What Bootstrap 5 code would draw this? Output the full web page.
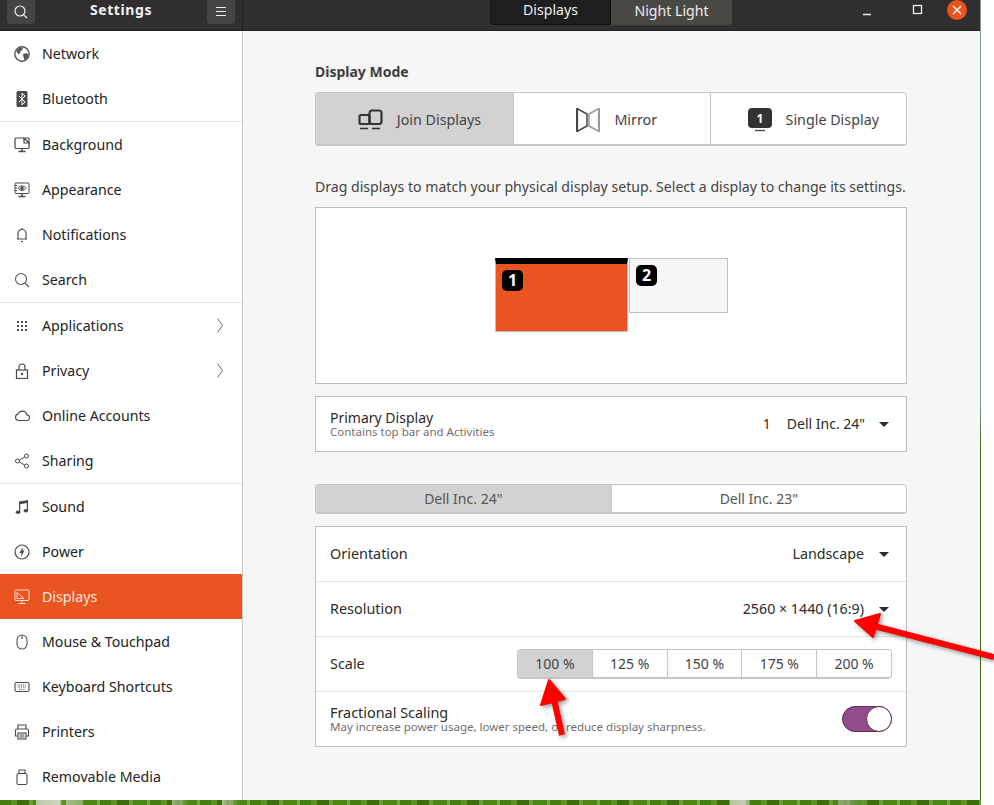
<!DOCTYPE html>
<html lang="en">
<head>
    <meta charset="UTF-8">
    <meta name="viewport" content="width=device-width, initial-scale=1.0">
    <title>Settings - Displays</title>
    <link href="https://cdn.jsdelivr.net/npm/bootstrap@5.3.0/dist/css/bootstrap.min.css" rel="stylesheet">
    <style>
        html, body { height: 100%; }
        body {
            background: #fff;
            font-family: "Noto Sans", "Open Sans", sans-serif;
            font-size: 14px;
            color: #2e2e2e;
            overflow: hidden;
        }
        .screen { height: 805px; display: flex; flex-direction: column; position: relative; }
        .app-window {
            height: 800px; width: 981px; display: flex; flex-direction: column;
            border-right: 1px solid #3f6b10;
            border-image: linear-gradient(#7d9aa3 0, #7d9aa3 50%, #3f6b10 56%, #3f6b10 100%) 1;
        }
        .grass {
            height: 5px; width: 981px;
            background:
                linear-gradient(90deg, transparent 36px, #b9c9a4 36px, #cfd8bf 60px, transparent 62px, transparent 66px, #a8bd8c 66px, #8fae68 82px, transparent 84px, transparent 172px, #9db67d 172px, transparent 190px, transparent 222px, #aebf95 222px, transparent 240px, transparent 730px, #b4c5a0 730px, #c4d0b4 745px, transparent 750px, transparent 838px, #8fa875 838px, transparent 870px),
                repeating-linear-gradient(90deg, #44800e 0 11px, #5c921f 11px 17px, #3a6f0c 17px 29px, #6b9c35 29px 33px, #4c8714 33px 47px, #7ba64b 47px 50px);
        }
        .title-bar { height: 31px; background: #302e2e; border-bottom: 1px solid #1f1e1e; color: #fff; flex-shrink: 0; }
        .title-left { width: 242px; padding: 0 7px; }
        .title-btn {
            width: 28px; height: 24px; background: #474543; border-radius: 0 0 4px 4px;
            display: flex; align-items: center; justify-content: center;
        }
        .title-name { font-weight: 700; font-size: 14px; letter-spacing: .6px; color: #f2f2f2; line-height: 20px; }
        .title-right { flex: 1; position: relative; border-left: 1px solid #222; }
        .view-tabs { margin-left: 247px; height: 25px; }
        .view-tabs .vt {
            width: 121px; height: 25px; padding-bottom: 4px; display: flex; align-items: center; justify-content: center;
            font-size: 14.1px; color: #eee; background: #4a4845; border-radius: 0 0 4px 0;
        }
        .view-tabs .vt.on { background: #1f1e1e; border-radius: 0 0 0 4px; border: 1px solid #111; border-top: 0; }
        .win-ctl { position: absolute; top: 0; left: 0; width: 737px; height: 30px; }
        .app-body { flex: 1; display: flex; min-height: 0; }
        .side-pane { width: 243px; background: #fff; border-right: 1px solid #c9c9c9; flex-shrink: 0; }
        .side-pane .list-group-item {
            height: 45px; border: 0; border-radius: 0; margin-top: 0; padding: 0 0 0 14px; background: #fff;
            display: flex; align-items: center; color: #232323; font-size: 14.2px;
        }
        .side-pane .list-group-item.with-sep { height: 46px; border-top: 1px solid #e3e3e3; }
        .side-pane .list-group-item.active { background: #e95420; color: #fde9e0; margin-top: 0; }
        .side-pane svg.ico { width: 16px; height: 16px; margin-right: 12px; flex-shrink: 0; }
        .side-pane .chev { margin-left: auto; margin-right: 19px; }
        .main-pane { flex: 1; background: #f6f6f6; padding: 31px 73px 0 72px; }
        .sec-title { font-weight: 700; font-size: 14px; color: #3d3d3d; line-height: 20px; margin-bottom: 10px; }
        .seg-group { display: flex; width: 100%; border: 1px solid #c6c6c6; border-bottom-width: 2px; border-radius: 4px; overflow: hidden; background: #fff; }
        .seg-group .btn {
            border: 0; border-left: 1px solid #c6c6c6; border-radius: 0; background: #fefefe; color: #444;
            font-size: 14px; padding: 0; flex: 1 1 0; display: flex; align-items: center; justify-content: center;
        }
        .seg-group .btn:first-child { border-left: 0; }
        .seg-group .btn.on { background: #d2d2d2; }
        .mode-group { height: 54px; }
        .mode-group .btn { gap: 14px; font-size: 14.3px; padding: 3px 0 0 10px; }
        .mode-group .btn:first-child { flex: 0 0 197px; }
        .hint-text { color: #444; margin: 31px 0 10px; line-height: 20px; font-size: 14.1px; white-space: nowrap; }
        .arrange-box { height: 177px; background: #fff; border: 1px solid #bdbdbd; position: relative; }
        .mon-a { position: absolute; left: 179px; top: 50px; width: 133px; height: 74px; background: #e95420; border: 1px solid #c2c2c2; border-top: 6px solid #000; }
        .mon-b { position: absolute; left: 313px; top: 50px; width: 99px; height: 55px; background: #f6f6f6; border: 1px solid #c2c2c2; }
        .mon-num {
            position: absolute; width: 21px; height: 21px; background: #000; color: #fff; border-radius: 5px;
            font-weight: 700; font-size: 16px; line-height: 21px; text-align: center;
        }
        .mon-a .mon-num { left: 6px; top: 6px; }
        .mon-b .mon-num { left: 6px; top: 6px; }
        .panel-box { background: #fff; border: 1px solid #bdbdbd; }
        .primary-row { height: 56px; margin: 12px 0 32px; padding: 0 17px 0 14px; }
        .sub-text { font-size: 11.5px; color: #6f6f6f; line-height: 12px; white-space: nowrap; }
        .main-text { line-height: 16px; color: #2b2b2b; }
        .label-wide { font-size: 14.4px; }
        .caret-down { width: 0; height: 0; border-left: 5px solid transparent; border-right: 5px solid transparent; border-top: 5px solid #2b2b2b; margin-left: 14px; }
        .disp-tabs { height: 30px; margin-bottom: 12px; }
        .disp-tabs .btn { color: #555; }
        .panel-box.list-group { border-radius: 0; }
        .panel-box .list-group-item {
            height: 55px; border: 0; border-top: 1px solid #e3e3e3; border-radius: 0; margin-top: 0; padding: 0 14px;
            display: flex; align-items: center; justify-content: space-between; color: #2b2b2b; background: #fff;
        }
        .panel-box .list-group-item:first-child { border-top: 0; height: 54px; }
        .panel-box .list-group-item.pick-row { padding-right: 17px; font-size: 14.25px; }
        .pick-row .caret-down { margin-left: 15px; }
        .row-label { font-size: 14.4px; }
        .scale-group { width: 375px; height: 30px; }
        .fs-switch { width: 50px; height: 26px; background: #924d8b; border: 1px solid #5c2f58; border-radius: 13px; position: relative; }
        .fs-knob { position: absolute; right: -1px; top: -1px; width: 26px; height: 26px; background: #fff; border: 1px solid #5c2f58; border-radius: 50%; }
        .red-marks { position: absolute; left: 0; top: 0; pointer-events: none; filter: drop-shadow(2px 2px 2px rgba(0,0,0,.4)); }
    </style>
</head>
<body>
<div class="screen">
    <div class="app-window">
        <div class="title-bar d-flex">
            <div class="title-left d-flex justify-content-between">
                <div class="title-btn">
                    <svg width="14" height="14" viewBox="0 0 14 14" fill="none" stroke="#eee" stroke-width="1.2"><circle cx="6" cy="6" r="5"/><path d="M9.8 9.8L13 13"/></svg>
                </div>
                <span class="title-name">Settings</span>
                <div class="title-btn">
                    <svg width="12" height="10" viewBox="0 0 12 10" stroke="#eee" stroke-width="1"><path d="M1 .5h10M1 4.5h10M1 8.5h10"/></svg>
                </div>
            </div>
            <div class="title-right">
                <div class="view-tabs d-flex">
                    <div class="vt on">Displays</div>
                    <div class="vt">Night Light</div>
                </div>
                <svg class="win-ctl" viewBox="0 0 737 30">
                    <path d="M620 14.5h8" stroke="#eee" stroke-width="1.5"/>
                    <rect x="670.5" y="5.5" width="8" height="8" fill="none" stroke="#eee" stroke-width="1.3"/>
                    <circle cx="714" cy="10" r="10" fill="#e95420"/>
                    <path d="M710 6l8 8M718 6l-8 8" stroke="#fff" stroke-width="1.4"/>
                </svg>
            </div>
        </div>
        <div class="app-body">
            <div class="side-pane list-group list-group-flush">
                <a class="list-group-item">
                    <svg class="ico" viewBox="0 0 16 16"><circle cx="8" cy="8" r="7.2" fill="none" stroke="#555" stroke-width="1.4"/><path d="M3 4l3-2.500 3 .5-1 2.500-2 .5.5 2-2 1-2-2zM9 8l4-1 1.500 2-2 4-2 1-1-3z" fill="#555"/></svg>
                    Network
                </a>
                <a class="list-group-item">
                    <svg class="ico" viewBox="0 0 16 16"><rect x="2.500" y="0" width="11" height="16" rx="1.500" fill="#4a4a4a"/><path d="M5 5l6 6-3 3V2l3 3-6 6" fill="none" stroke="#fff" stroke-width="1"/></svg>
                    Bluetooth
                </a>
                <a class="list-group-item with-sep">
                    <svg class="ico" viewBox="0 0 16 16" fill="none" stroke="#4a4a4a" stroke-width="1.200"><path d="M10 1H2a1 1 0 0 0-1 1v8.500a1 1 0 0 0 1 1h12a1 1 0 0 0 1-1V6"/><path d="M10 1l5 5V2a1 1 0 0 0-1-1zM10 1v5h5" fill="#fff"/><path d="M4.500 14.500h7M8 11.500v3" stroke-width="1.500"/></svg>
                    Background
                </a>
                <a class="list-group-item">
                    <svg class="ico" viewBox="0 0 16 16" fill="none" stroke="#4a4a4a" stroke-width="1"><rect x="1" y="1" width="14" height="10.500" rx="1"/><path d="M4 6.200c2.500-3 5.500-3 8 0-2.500 3-5.500 3-8 0z"/><circle cx="8" cy="6.200" r="1.300" fill="#4a4a4a"/><path d="M1 3.500h2M1 6h2M1 8.500h2"/><path d="M4.500 14.500h7M8 11.500v3" stroke-width="1.500"/></svg>
                    Appearance
                </a>
                <a class="list-group-item">
                    <svg class="ico" viewBox="0 0 16 16" fill="none" stroke="#4a4a4a" stroke-width="1.200"><path d="M4 12V6.500a4 4 0 0 1 8 0V12zM3 12h10M8 1v1.500M7 14.500h2"/></svg>
                    Notifications
                </a>
                <a class="list-group-item">
                    <svg class="ico" viewBox="0 0 16 16" fill="none" stroke="#555" stroke-width="1.100"><circle cx="7" cy="7" r="5.500"/><path d="M11 11l4 4"/></svg>
                    Search
                </a>
                <a class="list-group-item with-sep">
                    <svg class="ico" viewBox="0 0 16 16" fill="#4a4a4a"><rect x="3" y="3" width="2" height="2"/><rect x="7" y="3" width="2" height="2"/><rect x="11" y="3" width="2" height="2"/><rect x="3" y="7" width="2" height="2"/><rect x="7" y="7" width="2" height="2"/><rect x="11" y="7" width="2" height="2"/><rect x="3" y="11" width="2" height="2"/><rect x="7" y="11" width="2" height="2"/><rect x="11" y="11" width="2" height="2"/></svg>
                    Applications
                    <svg class="chev" width="6" height="15" viewBox="0 0 6 15" fill="none" stroke="#666"><path d="M.5 .5L5.500 7.500.5 14.500"/></svg>
                </a>
                <a class="list-group-item">
                    <svg class="ico" viewBox="0 0 16 16" fill="none" stroke="#4a4a4a" stroke-width="1.200"><rect x="2.500" y="7" width="11" height="8.500"/><path d="M5 7V4a3 3 0 0 1 6 0v3"/><circle cx="8" cy="11" r="1.200" fill="#4a4a4a" stroke="none"/></svg>
                    Privacy
                    <svg class="chev" width="6" height="15" viewBox="0 0 6 15" fill="none" stroke="#666"><path d="M.5 .5L5.500 7.500.5 14.500"/></svg>
                </a>
                <a class="list-group-item">
                    <svg class="ico" viewBox="0 0 16 16" fill="none" stroke="#4a4a4a" stroke-width="1.100"><path d="M4 12.500h8.500a2.800 2.800 0 0 0 .3-5.600 4.500 4.500 0 0 0-8.600-1A3.400 3.400 0 0 0 4 12.500z"/></svg>
                    Online Accounts
                </a>
                <a class="list-group-item">
                    <svg class="ico" viewBox="0 0 16 16" fill="none" stroke="#4a4a4a" stroke-width="1"><circle cx="3.500" cy="8" r="2"/><circle cx="12.500" cy="3" r="2"/><circle cx="12.500" cy="13" r="2"/><path d="M5.300 7l5.400-3M5.300 9l5.400 3"/></svg>
                    Sharing
                </a>
                <a class="list-group-item with-sep">
                    <svg class="ico" viewBox="0 0 16 16" fill="#4a4a4a"><path d="M5 2.500L14 1v10.500h-1.200V4L6.200 5.200V13H5z"/><ellipse cx="4" cy="13.200" rx="2.300" ry="1.800"/><ellipse cx="11.800" cy="11.700" rx="2.300" ry="1.800"/></svg>
                    Sound
                </a>
                <a class="list-group-item">
                    <svg class="ico" viewBox="0 0 16 16"><circle cx="8" cy="8" r="7" fill="none" stroke="#4a4a4a" stroke-width="1.200"/><path d="M8.800 3L5.500 9h2l-.5 4 3.500-6.500h-2z" fill="#4a4a4a"/></svg>
                    Power
                </a>
                <a class="list-group-item active">
                    <svg class="ico" viewBox="0 0 16 16" fill="none" stroke="#fcd9c8" stroke-width="1"><rect x="1" y="1" width="14" height="10.500" rx="1"/><path d="M3 9.500V3.500l7 6zM4.500 14.500h7M8 11.500v3"/></svg>
                    Displays
                </a>
                <a class="list-group-item">
                    <svg class="ico" viewBox="0 0 16 16" fill="none" stroke="#555" stroke-width="1.100"><rect x="3" y="1" width="10" height="14" rx="5"/><path d="M8 1v4"/></svg>
                    Mouse &amp; Touchpad
                </a>
                <a class="list-group-item">
                    <svg class="ico" viewBox="0 0 16 16" fill="none" stroke="#4a4a4a" stroke-width="1.100"><rect x="1" y="3.500" width="14" height="9" rx="1.500"/><path d="M3.500 6h9M3.500 8h9M5 10.300h6" stroke-dasharray="1 .8"/></svg>
                    Keyboard Shortcuts
                </a>
                <a class="list-group-item">
                    <svg class="ico" viewBox="0 0 16 16" fill="none" stroke="#4a4a4a" stroke-width="1.100"><path d="M4 5V1h8v4M4 12H1.500V6.500a1.500 1.500 0 0 1 1.500-1.500h10a1.500 1.500 0 0 1 1.500 1.500V12H12"/><rect x="4" y="9" width="8" height="6"/><path d="M5.500 11h5M5.500 13h5"/></svg>
                    Printers
                </a>
                <a class="list-group-item">
                    <svg class="ico" viewBox="0 0 16 16" fill="none" stroke="#4a4a4a" stroke-width="1.100"><rect x="3" y="4.500" width="10" height="11" rx="1.500"/><path d="M5 4.500V1h6v3.500M7 2.500h.1M9 2.500h.1"/></svg>
                    Removable Media
                </a>
            </div>
            <div class="main-pane">
                <div class="sec-title">Display Mode</div>
                <div class="seg-group mode-group">
                    <button class="btn on">
                        <svg width="25" height="22" viewBox="0 0 25 22" fill="none" stroke="#333" stroke-width="2.200"><rect x="1.500" y="6" width="10" height="9" rx="1.500"/><rect x="11.500" y="1.500" width="12" height="13.500" rx="2.500"/><path d="M2 19.500h8M14 19.500h8" stroke-width="1.500"/></svg>
                        Join Displays
                    </button>
                    <button class="btn">
                        <svg width="24" height="24" viewBox="0 0 24 24" fill="none" stroke-width="1.500"><path d="M1 .5l10 5.500v12L1 23.500z" stroke="#444"/><path d="M23 .5l-10 5.500v12l10 5.500z" stroke="#999"/><path d="M1 .5v23" stroke="#444" stroke-width="2.200"/><path d="M23 .5v23" stroke="#999" stroke-width="2.200"/></svg>
                        Mirror
                    </button>
                    <button class="btn">
                        <svg width="24" height="24" viewBox="0 0 24 24"><rect x="0" y="0" width="24" height="20" rx="4" fill="#333"/><path d="M7 22.500h10" stroke="#555" stroke-width="1.500"/><text x="12" y="15" text-anchor="middle" fill="#fff" font-size="12" font-weight="700" font-family="Noto Sans">1</text></svg>
                        Single Display
                    </button>
                </div>
                <div class="hint-text">Drag displays to match your physical display setup. Select a display to change its settings.</div>
                <div class="arrange-box">
                    <div class="mon-a"><span class="mon-num">1</span></div>
                    <div class="mon-b"><span class="mon-num">2</span></div>
                </div>
                <div class="panel-box primary-row d-flex align-items-center justify-content-between">
                    <div>
                        <div class="main-text">Primary Display</div>
                        <div class="sub-text">Contains top bar and Activities</div>
                    </div>
                    <div class="d-flex align-items-center main-text">
                        <span class="me-3">1</span>Dell Inc. 24"
                        <span class="caret-down"></span>
                    </div>
                </div>
                <div class="seg-group disp-tabs">
                    <button class="btn on">Dell Inc. 24"</button>
                    <button class="btn">Dell Inc. 23"</button>
                </div>
                <div class="panel-box list-group">
                    <div class="list-group-item pick-row">
                        <span class="row-label">Orientation</span>
                        <span class="d-flex align-items-center">Landscape<span class="caret-down"></span></span>
                    </div>
                    <div class="list-group-item pick-row">
                        <span class="row-label">Resolution</span>
                        <span class="d-flex align-items-center">2560 × 1440 (16:9)<span class="caret-down"></span></span>
                    </div>
                    <div class="list-group-item">
                        <span class="row-label">Scale</span>
                        <div class="seg-group scale-group">
                            <button class="btn on">100 %</button>
                            <button class="btn">125 %</button>
                            <button class="btn">150 %</button>
                            <button class="btn">175 %</button>
                            <button class="btn">200 %</button>
                        </div>
                    </div>
                    <div class="list-group-item">
                        <div>
                            <div class="main-text label-wide">Fractional Scaling</div>
                            <div class="sub-text">May increase power usage, lower speed, or reduce display sharpness.</div>
                        </div>
                        <div class="fs-switch"><div class="fs-knob"></div></div>
                    </div>
                </div>
            </div>
        </div>
    </div>
    <div class="grass"></div>
    <svg class="red-marks" width="994" height="805" viewBox="0 0 994 805">
        <g fill="#f00" stroke="#f00" stroke-linejoin="round">
            <path d="M994 657L870 625" stroke-width="6" fill="none"/>
            <path d="M855 621L880 614 873 637z" stroke-width="2"/>
            <path d="M562 735L553 695" stroke-width="6" fill="none"/>
            <path d="M549 680L541 705 565 699z" stroke-width="2"/>
        </g>
    </svg>
</div>
</body>
</html>
